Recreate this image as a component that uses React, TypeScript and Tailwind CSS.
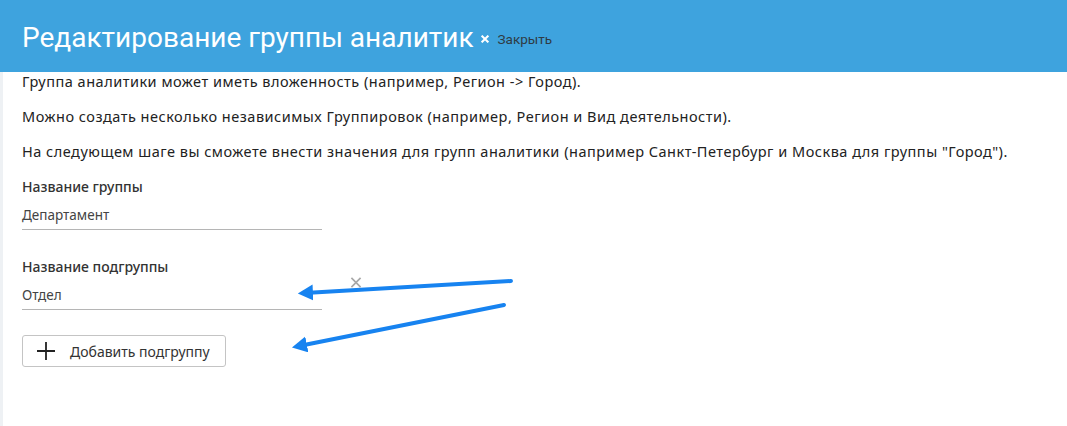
const notes = [
  "Группа аналитики может иметь вложенность (например, Регион -> Город).",
  "Можно создать несколько независимых Группировок (например, Регион и Вид деятельности).",
  'На следующем шаге вы сможете внести значения для групп аналитики (например Санкт-Петербург и Москва для группы "Город").',
];

const Cross = ({ className, w = 2 }: { className?: string; w?: number }) => (
  <svg viewBox="0 0 12 12" className={className} fill="none" stroke="currentColor" strokeWidth={w}>
    <path d="M1 1 L11 11 M11 1 L1 11" />
  </svg>
);

const Field = ({ label, value, onRemove }: { label: string; value: string; onRemove?: boolean }) => (
  <div className="flex flex-col">
    <div className="text-[14px] font-medium leading-[16px] text-[#333]">{label}</div>
    <div className="flex items-start">
      <div className="mt-[12px] w-[300px] border-b border-[#b5b5b5] pb-[6px] text-[13.5px] leading-[16px] text-[#444]">
        {value}
      </div>
      {onRemove && <Cross className="ml-[28px] mt-[2px] h-[11px] w-[12px] text-[#a8a8a8]" w={1.8} />}
    </div>
  </div>
);

export default function App() {
  return (
    <div
      className="relative min-h-[426px] w-full bg-white"
      style={{ fontFamily: "'Noto Sans', Roboto, sans-serif" }}
    >
      <div
        className="flex h-[72px] items-center gap-[7px] bg-[#3ea3de] px-[22px] pt-[3px]"
        style={{ fontFamily: "Roboto, 'Noto Sans', sans-serif" }}
      >
        <h1 className="text-[28px] font-normal leading-none text-white">Редактирование группы аналитик</h1>
        <div className="flex items-center gap-[9px] pt-[3px]">
          <Cross className="h-[8px] w-[8px] text-white" w={3} />
          <span className="text-[13.5px] text-[#2f3b44]">Закрыть</span>
        </div>
      </div>

      <div className="flex min-h-[354px] border-l-[3px] border-[#eef1f4] pl-[19px]">
        <div className="flex flex-col">
          <div className="flex flex-col gap-[17px] text-[14.5px] leading-[18px] tracking-[0.5px] text-[#222]">
            {notes.map((t) => (
              <p key={t}>{t}</p>
            ))}
          </div>

          <div className="mt-[19px]">
            <Field label="Название группы" value="Департамент" />
          </div>
          <div className="mt-[29px]">
            <Field label="Название подгруппы" value="Отдел" onRemove />
          </div>

          <button className="mt-[25px] flex h-[32px] w-[204px] items-center gap-[15px] rounded-[3px] border border-[#c4c4c4] bg-white pl-[14px] text-[14px] text-[#333]">
            <svg viewBox="0 0 18 18" className="h-[18px] w-[18px] text-[#222]" stroke="currentColor" strokeWidth={1.8}>
              <path d="M9 0 V18 M0 9 H18" />
            </svg>
            Добавить подгруппу
          </button>
        </div>
      </div>

      {/* annotation arrows */}
      <svg className="pointer-events-none absolute left-0 top-0" width="1067" height="426">
        <defs>
          <marker id="head" markerWidth="5" markerHeight="5" refX="2" refY="2" orient="auto" markerUnits="strokeWidth">
            <path d="M0,0 L3.8,2 L0,4 Z" fill="#1783f0" />
          </marker>
        </defs>
        <line x1="511" y1="281" x2="305" y2="293" stroke="#1783f0" strokeWidth="4" strokeLinecap="round" markerEnd="url(#head)" />
        <line x1="504" y1="305" x2="299" y2="346" stroke="#1783f0" strokeWidth="4" strokeLinecap="round" markerEnd="url(#head)" />
      </svg>
    </div>
  );
}
